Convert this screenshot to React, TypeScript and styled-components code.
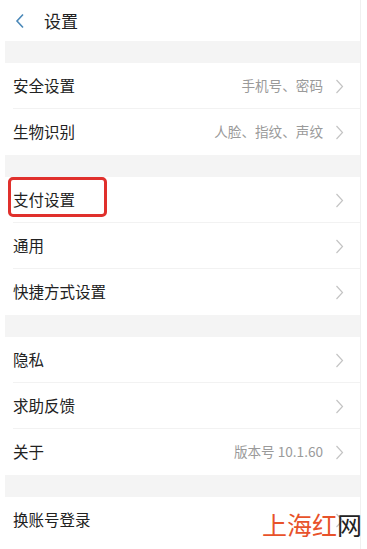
import React from "react";
import styled, { createGlobalStyle } from "styled-components";

const Global = createGlobalStyle`
  html, body { margin: 0; padding: 0; background: #fff; }
  body { font-family: "Noto Sans CJK SC", "Noto Sans", sans-serif; }
`;

const Page = styled.div`
  position: relative;
  width: 367px;
  height: 549px;
  overflow: hidden;
  background: #fff;
`;

const Column = styled.div`
  margin-left: 5px;
  width: 356px;
  min-height: 549px;
  border-right: 1px solid #f0f0f0;
  box-sizing: border-box;
  display: flex;
  flex-direction: column;
`;

const Header = styled.div`
  height: 41px;
  display: flex;
  align-items: center;
  padding-left: 10px;
  gap: 19px;
`;

const Title = styled.div`
  font-size: 17px;
  color: #222;
  line-height: 1;
`;

const Band = styled.div`
  height: 22px;
  background: #f4f4f4;
`;

const Row = styled.div<{ $last?: boolean }>`
  position: relative;
  height: 46px;
  display: flex;
  align-items: center;
  padding-left: 8px;
  padding-right: 16px;
  &::after {
    content: "";
    display: ${(p) => (p.$last ? "none" : "block")};
    position: absolute;
    left: 8px;
    right: 0;
    bottom: 0;
    height: 1px;
    background: #f2f2f2;
  }
`;

const Label = styled.div`
  flex: 1;
  font-size: 15.5px;
  color: #222;
  line-height: 1;
`;

const Value = styled.div`
  font-size: 13.6px;
  color: #9a9a9a;
  margin-right: 12px;
  line-height: 1;
`;

const Highlight = styled.div`
  position: absolute;
  left: 3px;
  top: 0px;
  width: 99px;
  height: 40px;
  border: 3px solid #e0302c;
  border-radius: 5px;
  box-sizing: border-box;
`;

const Watermark = styled.div`
  position: absolute;
  left: 262px;
  top: 512px;
  font-size: 25px;
  line-height: 1;
  letter-spacing: 0px;
  color: #e8522a;
  span { color: #222; }
`;

const Back = () => (
  <svg width="10" height="16" viewBox="0 0 10 16">
    <path d="M8 1.5 L2 8 L8 14.5" fill="none" stroke="#4a88b8" strokeWidth="1.6" />
  </svg>
);

const Chevron = () => (
  <svg width="9" height="15" viewBox="0 0 9 15">
    <path d="M1.5 1 L7.5 7.5 L1.5 14" fill="none" stroke="#c4c4c4" strokeWidth="1.2" />
  </svg>
);

type Item = { label: string; value?: string; highlight?: boolean };

const groups: Item[][] = [
  [
    { label: "安全设置", value: "手机号、密码" },
    { label: "生物识别", value: "人脸、指纹、声纹" },
  ],
  [
    { label: "支付设置", highlight: true },
    { label: "通用" },
    { label: "快捷方式设置" },
  ],
  [
    { label: "隐私" },
    { label: "求助反馈" },
    { label: "关于", value: "版本号 10.1.60" },
  ],
  [{ label: "换账号登录" }],
];

export default function App() {
  return (
    <Page>
      <Global />
      <Column>
        <Header>
          <Back />
          <Title>设置</Title>
        </Header>
        {groups.map((g, gi) => (
          <React.Fragment key={gi}>
            <Band />
            {g.map((it, i) => (
              <Row key={it.label} $last={i === g.length - 1}>
                {it.highlight && <Highlight />}
                <Label>{it.label}</Label>
                {it.value && <Value>{it.value}</Value>}
                <Chevron />
              </Row>
            ))}
          </React.Fragment>
        ))}
      </Column>
      <Watermark>
        上海红<span>网</span>
      </Watermark>
    </Page>
  );
}
